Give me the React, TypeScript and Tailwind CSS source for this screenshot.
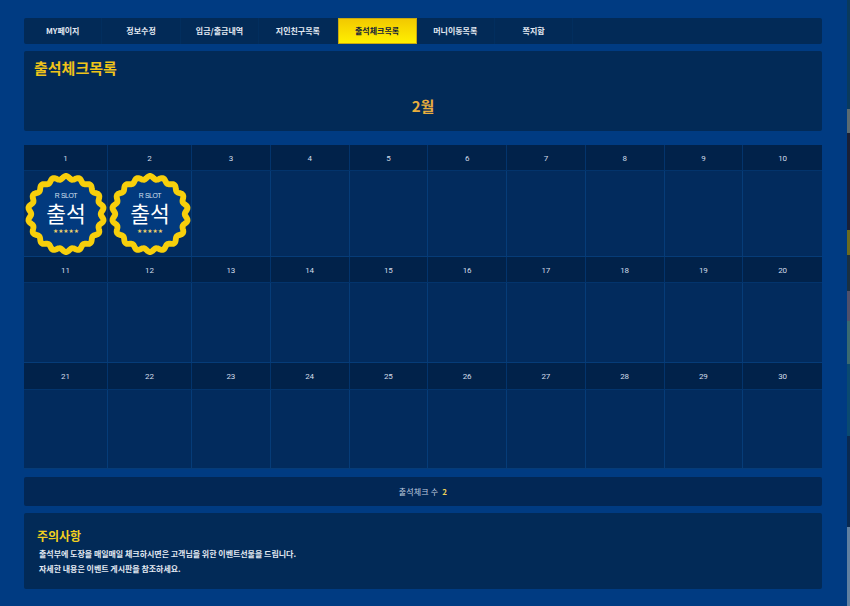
import React from 'react';

const FONT = "font-['Noto_Sans_CJK_KR','Noto_Sans',sans-serif]";

const tabs = ['MY페이지', '정보수정', '입금/출금내역', '지인친구목록', '출석체크목록', '머니이동목록', '쪽지함'];
const weeks = [
  [1, 2, 3, 4, 5, 6, 7, 8, 9, 10],
  [11, 12, 13, 14, 15, 16, 17, 18, 19, 20],
  [21, 22, 23, 24, 25, 26, 27, 28, 29, 30],
];
const headHeights = ['h-[26px]', 'h-[26px]', 'h-[27px]'];
const rowHeights = ['h-[86px]', 'h-[80px]', 'h-[79px]'];
const checked = [1, 2];

// scalloped ring, 18 bumps
const wavyPath = (() => {
  const pts: string[] = [];
  for (let i = 0; i <= 360; i += 2) {
    const a = (i * Math.PI) / 180;
    const r = 37.3 + 1.7 * Math.cos(a * 18);
    const x = 42 + r * Math.sin(a);
    const y = 42 - r * Math.cos(a);
    pts.push(`${i === 0 ? 'M' : 'L'}${x.toFixed(2)} ${y.toFixed(2)}`);
  }
  return pts.join(' ') + 'Z';
})();

const Badge = () => (
  <svg width="84" height="84" viewBox="0 0 84 84" className="mt-[1px] ml-[1px]">
    <path d={wavyPath} fill="#023a7e" stroke="#f7cf0b" strokeWidth="6" strokeLinejoin="round" />
    <text x="42" y="26" textAnchor="middle" fontSize="7" letterSpacing="-0.4" fill="#d5e0ee" fontFamily="Liberation Sans">R SLOT</text>
    <text x="42" y="50" textAnchor="middle" fontSize="22" fill="#ffffff" fontFamily="Noto Sans CJK KR">출석</text>
    <text x="42" y="61" textAnchor="middle" fontSize="6" fontWeight="bold" fill="#f5d76a" fontFamily="DejaVu Sans">★★★★★</text>
  </svg>
);

const App: React.FC = () => {
  return (
    <div className={`flex h-[606px] w-[850px] overflow-hidden bg-[#003b82] ${FONT}`}>
      <div className="flex w-[847px] shrink-0 flex-col pl-6 pt-[18px]">
        {/* Tabs */}
        <div className="flex h-[26px] w-[798px] rounded-[2px] bg-[#022a57]">
          {tabs.map((t, i) => (
            <div
              key={t}
              className={
                i === 4
                  ? 'flex w-[79px] items-center justify-center border border-[#c9a80f] bg-gradient-to-b from-[#f2c900] to-[#fff000] text-[8px] font-bold text-[#10203a]'
                  : 'flex w-[78.4px] items-center justify-center border-r border-[#022e5e] text-[8px] font-bold text-[#e3e9f2]'
              }
            >
              {t}
            </div>
          ))}
        </div>

        {/* Title */}
        <div className="mt-[7px] h-[80px] w-[798px] rounded-[2px] bg-[#022a57] pl-[10px] pt-[6px]">
          <h1 className="text-[15px] leading-[22px] font-bold text-[#f0c419]">출석체크목록</h1>
          <p className="mt-[16px] pr-[10px] text-center text-[15px] leading-[22px] font-bold text-[#e8ad3d]">2월</p>
        </div>

        {/* Calendar */}
        <div className="mt-[14px] w-[798px]">
          {weeks.map((week, w) => (
            <div key={w}>
              <div className={`grid grid-cols-[84px_84px_repeat(8,1fr)] bg-[#01224a] ${headHeights[w]}`}>
                {week.map(d => (
                  <div key={d} className="flex items-center justify-center border-r border-b border-[#03346c] pt-[2px] font-['Roboto',sans-serif] text-[8px] text-[#d3dde9] last:border-r-0">
                    {d}
                  </div>
                ))}
              </div>
              <div className={`grid grid-cols-[84px_84px_repeat(8,1fr)] bg-[#022b5d] ${rowHeights[w]}`}>
                {week.map(d => (
                  <div key={d} className="flex items-center justify-center border-r border-b border-[#063c78] last:border-r-0">
                    {checked.includes(d) && <Badge />}
                  </div>
                ))}
              </div>
            </div>
          ))}
        </div>

        {/* Count */}
        <div className="mt-2 flex h-[29px] w-[798px] items-center justify-center gap-1 rounded-[2px] bg-[#022755] text-[8px] tracking-[0.15px] text-[#c3d0e0]">
          출석체크 수 <b className="text-[#efd25a]">2</b>
        </div>

        {/* Notice */}
        <div className="mt-[7px] h-[76px] w-[798px] rounded-[2px] bg-[#022a57] pl-[13px] pt-[14px]">
          <h2 className="text-[12px] leading-[18px] font-bold text-[#f2d01e]">주의사항</h2>
          <p className="mt-[2px] pl-[2px] text-[8px] leading-[14px] font-bold tracking-[-0.03px] text-[#e3e9f2]">출석부에 도장을 매일매일 체크하시면은 고객님을 위한 이벤트선물을 드립니다.</p>
          <p className="pl-[2px] text-[8px] leading-[15px] font-bold tracking-[-0.03px] text-[#e3e9f2]">자세한 내용은 이벤트 게시판을 참조하세요.</p>
        </div>
      </div>
      {/* sliver of the window behind */}
      <div className="w-[3px] bg-[linear-gradient(to_bottom,#0a3a5c_0%,#0a3a5c_18%,#5a6a70_18%,#5a6a70_22%,#1a2035_22%,#1a2035_38%,#6a6a20_38%,#6a6a20_42%,#1a3040_42%,#1a3040_48%,#50506a_48%,#50506a_53%,#3a6a70_53%,#3a6a70_60%,#0a4a70_60%,#0a4a70_72%,#0a2a50_72%,#0a2a50_87%,#6080a0_87%,#6080a0_100%)]" />
    </div>
  );
};

export default App;
